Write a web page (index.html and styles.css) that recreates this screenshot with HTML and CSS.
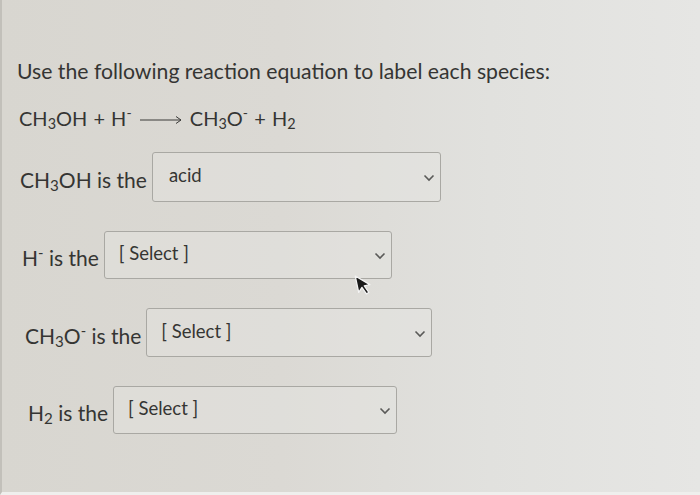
FILE: index.html
```html
<!DOCTYPE html>
<html>
<head>
<meta charset="utf-8">
<link rel="stylesheet" href="styles.css">
</head>
<body>
<div class="page">
  <div class="content">
    <p class="heading">Use the following reaction equation to label each species:</p>
    <p class="equation">CH<sub>3</sub>OH + H<sup>-</sup> <svg class="arrow" viewBox="0 0 42 10" width="42" height="10"><path d="M0 5 H41 M36 1.5 L41 5 L36 8.5" fill="none" stroke="#3a3a38" stroke-width="1"/></svg> CH<sub>3</sub>O<sup>-</sup> + H<sub>2</sub></p>

    <div class="row r1">
      <span class="label">CH<sub>3</sub>OH is the</span>
      <div class="select w1"><span class="value">acid</span><svg class="chev" viewBox="0 0 12 8" width="12" height="8"><path d="M1.5 1.5 L6 6 L10.5 1.5" fill="none" stroke="#5a5a58" stroke-width="1.6"/></svg></div>
    </div>

    <div class="row r2">
      <span class="label">H<sup>-</sup> is the</span>
      <div class="select w2"><span class="value">[ Select ]</span><svg class="chev" viewBox="0 0 12 8" width="12" height="8"><path d="M1.5 1.5 L6 6 L10.5 1.5" fill="none" stroke="#5a5a58" stroke-width="1.6"/></svg></div>
    </div>

    <div class="row r3">
      <span class="label">CH<sub>3</sub>O<sup>-</sup> is the</span>
      <div class="select w3"><span class="value">[ Select ]</span><svg class="chev" viewBox="0 0 12 8" width="12" height="8"><path d="M1.5 1.5 L6 6 L10.5 1.5" fill="none" stroke="#5a5a58" stroke-width="1.6"/></svg></div>
    </div>

    <div class="row r4">
      <span class="label">H<sub>2</sub> is the</span>
      <div class="select w4"><span class="value">[ Select ]</span><svg class="chev" viewBox="0 0 12 8" width="12" height="8"><path d="M1.5 1.5 L6 6 L10.5 1.5" fill="none" stroke="#5a5a58" stroke-width="1.6"/></svg></div>
    </div>
  </div>
  <svg class="cursor" viewBox="0 0 14 22" width="15" height="23"><path d="M1 1 L1 17 L5 13 L8 20 L10.5 19 L7.5 12 L13 12 Z" fill="#1a1a1a" stroke="#f4f4f4" stroke-width="1.2" stroke-linejoin="round"/></svg>
</div>
</body>
</html>
```

FILE: styles.css
```css
html, body {
  margin: 0;
  padding: 0;
}
body {
  width: 700px;
  height: 495px;
  overflow: hidden;
  background: #dcdad5;
  font-family: Lato, "Open Sans", "Liberation Sans", sans-serif;
  color: #353533;
}
.page {
  position: relative;
  width: 700px;
  height: 495px;
  box-sizing: border-box;
  border-left: 2px solid #c2c0ba;
  border-bottom: 3px solid #efefed;
  background: linear-gradient(90deg, #d8d6d0 0%, #dbd9d4 40%, #e1e1de 70%, #e6e6e4 100%);
}
.content {
  padding: 56px 0 0 15px;
}
.heading {
  margin: 0;
  font-size: 21.2px;
  line-height: 30px;
}
.equation {
  margin: 19px 0 0 2px;
  font-size: 20px;
  line-height: 26px;
  word-spacing: 1px;
}
sub {
  font-size: 0.72em;
  vertical-align: -0.18em;
  line-height: 0;
}
sup {
  font-size: 0.7em;
  vertical-align: 0.55em;
  line-height: 0;
}
.arrow {
  display: inline-block;
  vertical-align: 1px;
  margin: 0 2px;
}
.row {
  display: flex;
  align-items: center;
  gap: 5px;
}
.label {
  font-size: 21px;
  padding-top: 5px;
}
.select {
  box-sizing: border-box;
  display: flex;
  align-items: center;
  justify-content: space-between;
  border: 1px solid #a9a8a3;
  border-radius: 3px;
  background: rgba(232, 231, 228, 0.35);
  padding: 0 5px 0 16px;
}
.value {
  font-size: 18.5px;
  padding-bottom: 4px;
}
.chev {
  display: block;
  margin-top: 2px;
}
.r1 { margin: 21px 0 0 3px; }
.r2 { margin: 29px 0 0 5px; }
.r3 { margin: 29px 0 0 8px; }
.r4 { margin: 29px 0 0 11px; }
.w1 { width: 289px; height: 50px; }
.w2 { width: 288px; height: 48px; }
.w3 { width: 286px; height: 49px; }
.w4 { width: 284px; height: 48px; }
.r2 .select, .r3 .select, .r4 .select { padding-left: 14px; }
.cursor {
  position: absolute;
  left: 352px;
  top: 275px;
  transform: rotate(-12deg);
  transform-origin: 1px 1px;
}
```
